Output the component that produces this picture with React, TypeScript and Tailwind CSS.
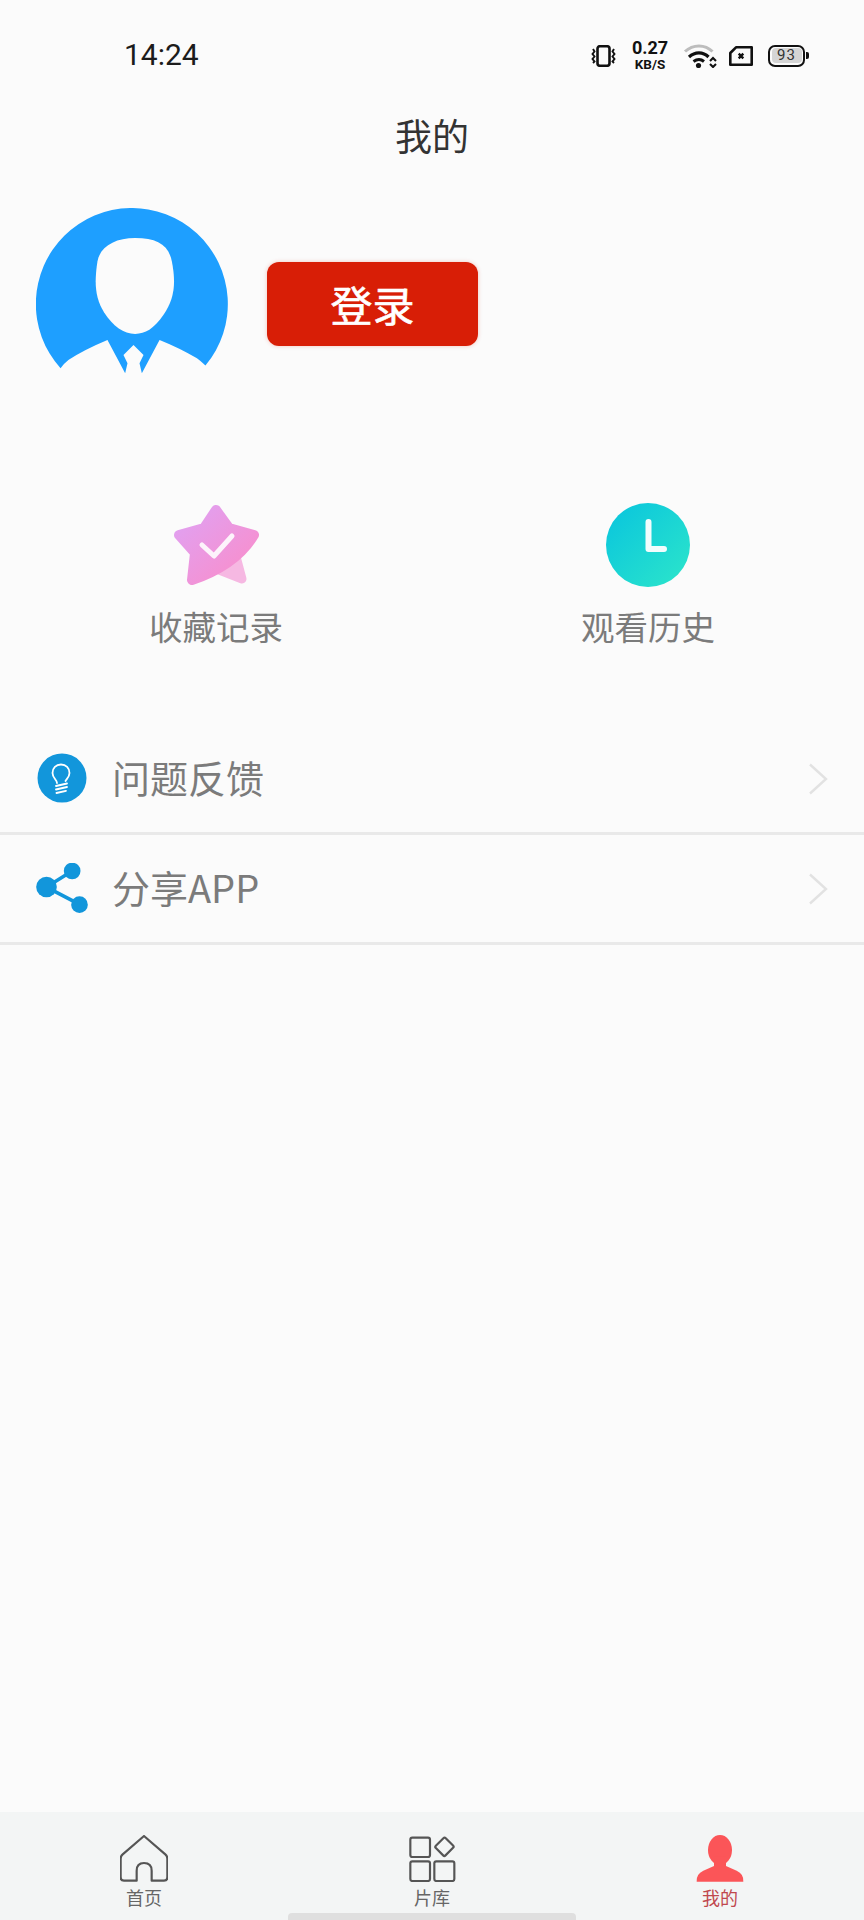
import { ReactNode } from 'react';

const cjk = "font-['Noto_Sans_CJK_SC',sans-serif]";

function StatusIcons() {
  return (
    <div className="flex items-center">
      {/* vibrate */}
      <svg width="25" height="22" viewBox="0 0 25 22" fill="none" stroke="#111">
        <rect x="6.5" y="1.2" width="12" height="19.6" rx="2.5" strokeWidth="2.6" />
        <path d="M2 4 L3.5 6.5 L1.5 9 L3.5 11.5 L1.5 14 L3.5 16.5 L2 18" strokeWidth="1.9" />
        <path d="M23 4 L21.5 6.5 L23.5 9 L21.5 11.5 L23.5 14 L21.5 16.5 L23 18" strokeWidth="1.9" />
      </svg>
      <div className="ml-[14px] w-[40px] flex flex-col items-center font-['Roboto',sans-serif] font-bold text-[#111]">
        <span className="text-[18px] leading-[14px]">0.27</span>
        <span className="text-[13.5px] leading-[12px] mt-[3px]">KB/S</span>
      </div>
      {/* wifi */}
      <svg className="ml-[13px]" width="34" height="24" viewBox="0 0 34 24" fill="none">
        <path d="M2 7.5 C10 0 22 0 29.5 7.5" stroke="#bdbdbd" strokeWidth="3" />
        <path d="M6 13 C12 7.5 20 7.5 25.5 13" stroke="#111" strokeWidth="3.2" />
        <path d="M10.5 17.5 C14 15 18 15 21 17.5" stroke="#111" strokeWidth="3" />
        <circle cx="15.5" cy="21.5" r="2.6" fill="#111" />
        <path d="M27 17 L30 14 L33 17 M27 20 L30 23 L33 20" stroke="#111" strokeWidth="2.1" />
      </svg>
      {/* no sim */}
      <svg className="ml-[12px]" width="24" height="20" viewBox="0 0 24 20" fill="none" stroke="#111">
        <path d="M7 1.3 H22.7 V18.7 H1.3 V7 Z" strokeWidth="2.6" strokeLinejoin="round" />
        <path d="M9.7 7.7 L14.3 12.3 M14.3 7.7 L9.7 12.3" strokeWidth="2.4" />
      </svg>
      {/* battery */}
      <div className="ml-[15px] w-[37px] h-[22px] rounded-[7px] border-[2.5px] border-[#111] p-[1.5px] relative">
        <div className="h-full rounded-[4px] bg-[#d5d5d5] flex items-center justify-center font-['Roboto',sans-serif] text-[15px] text-[#333] tracking-[1px]">
          93
        </div>
        <div className="absolute right-[-5.5px] top-[5px] w-[3px] h-[7px] rounded-r-[2px] bg-[#111]" />
      </div>
    </div>
  );
}

function Avatar() {
  return (
    <svg width="192" height="192" viewBox="48 55 575 575">
      <path
        d="M121.5 535 A287.5 287.5 0 1 1 555.5 527 Q540 512 530 505 Q480 475 418 450 L365 550 L358 520 L370 495 L340 465 L310 495 L322 520 L315 550 L262 450 Q190 480 145 510 Q132 520 121.5 535 Z"
        fill="#1e9fff"
      />
      <path
        d="M345 145 C410 145 445 165 455 215 C468 285 462 325 430 375 C400 418 375 432 345 432 C310 432 280 410 252 368 C225 325 222 280 232 215 C240 170 285 145 345 145 Z"
        fill="#fbfbfb"
      />
    </svg>
  );
}

function StarIcon() {
  return (
    <svg width="85" height="84" viewBox="0 0 85 84">
      <defs>
        <linearGradient id="star" x1="0" y1="0" x2="1" y2="1">
          <stop offset="0" stopColor="#dfa2f4" />
          <stop offset="1" stopColor="#fb8cc8" />
        </linearGradient>
      </defs>
      <path d="M60 46 L68 76 L40 65 Z" fill="#f6b8e2" stroke="#f6b8e2" strokeWidth="9" strokeLinejoin="round" />
      <path
        d="M42 7 L55 25 L80 32 Q62 62 18 77 L21 50 L5 32 L30 25 Z"
        fill="url(#star)"
        stroke="url(#star)"
        strokeWidth="10"
        strokeLinejoin="round"
      />
      <path d="M28 42 L40 53 L58 33" fill="none" stroke="#fdf3fb" strokeWidth="5" strokeLinecap="round" strokeLinejoin="round" />
    </svg>
  );
}

function ClockIcon() {
  return (
    <svg width="84" height="84" viewBox="0 0 84 84">
      <defs>
        <linearGradient id="clock" x1="0" y1="0" x2="1" y2="1">
          <stop offset="0" stopColor="#08c4de" />
          <stop offset="1" stopColor="#2de6ca" />
        </linearGradient>
      </defs>
      <circle cx="42" cy="42" r="42" fill="url(#clock)" />
      <path d="M42.5 19 V46 H58" fill="none" stroke="#f2fdfd" strokeWidth="6" strokeLinecap="round" strokeLinejoin="round" />
    </svg>
  );
}

function BulbIcon() {
  return (
    <svg width="50" height="50" viewBox="0 0 50 50">
      <circle cx="25" cy="25" r="24.5" fill="#1296db" />
      <path
        d="M20 30 C20 27 15.5 25 15.5 20 C15.5 15 19 11.5 24 11.5 C29 11.5 32.5 15 32.5 20 C32.5 24 29.5 26 28.5 28"
        fill="none"
        stroke="#fff"
        strokeWidth="1.8"
        strokeLinecap="round"
      />
      <path d="M19 33 L30 30.5 M19 36.5 L30 34 M19.5 40 L29 37.8" stroke="#fff" strokeWidth="1.8" strokeLinecap="round" />
    </svg>
  );
}

function ShareIcon() {
  return (
    <svg width="52" height="50" viewBox="48 368 153 150">
      <path d="M155 392 L78 440 L177 492" fill="none" stroke="#1296db" strokeWidth="11" />
      <circle cx="78" cy="440" r="31" fill="#1296db" />
      <circle cx="155" cy="392" r="25" fill="#1296db" />
      <circle cx="177" cy="493" r="25" fill="#1296db" />
    </svg>
  );
}

function HomeIcon() {
  return (
    <svg width="48" height="47" viewBox="90 105 144 141" fill="none">
      <path
        d="M162 108 L226 163 Q232 168 232 176 V232 Q232 242 222 242 H185 V212 Q185 189 162 189 Q140 189 140 212 V242 H102 Q92 242 92 232 V176 Q92 168 98 163 Z"
        stroke="#555"
        strokeWidth="6.5"
        strokeLinejoin="round"
      />
    </svg>
  );
}

function LibraryIcon() {
  return (
    <svg width="47" height="47" viewBox="955 105 141 141" fill="none" stroke="#555" strokeWidth="6.5">
      <rect x="959" y="113" width="59" height="58" rx="6" />
      <rect x="1041" y="119" width="41" height="42" rx="5" transform="rotate(45 1061 140)" />
      <rect x="959" y="184" width="59" height="59" rx="6" />
      <rect x="1031" y="184" width="60" height="59" rx="6" />
    </svg>
  );
}

function UserIcon() {
  return (
    <svg width="48" height="47" viewBox="168 105 144 141">
      <ellipse cx="240" cy="150" rx="36" ry="45" fill="#fb5558" />
      <rect x="222" y="170" width="36" height="34" fill="#fb5558" />
      <path d="M170 245 Q168 222 190 212 L222 198 L258 198 L290 212 Q312 222 310 245 Z" fill="#fb5558" />
    </svg>
  );
}

function Shortcut({ icon, label }: { icon: ReactNode; label: string }) {
  return (
    <div className="flex flex-col items-center">
      <div className="h-[84px] flex items-center justify-center">{icon}</div>
      <span className="mt-[15px] text-[33.5px] leading-[48px] text-[#7b7b7b]">{label}</span>
    </div>
  );
}

function MenuRow({ icon, label }: { icon: ReactNode; label: string }) {
  return (
    <div className="h-[110px] flex items-center pl-[36px] pr-[36px] border-b-[3px] border-[#e9e9e9]">
      <div className="w-[52px] -mt-[2px] flex justify-center">{icon}</div>
      <span className="ml-[24px] flex-1 text-[38px] leading-[50px] -mt-[3px] text-[#7b7b7b]">{label}</span>
      <svg width="20" height="32" viewBox="0 0 20 32" fill="none">
        <path d="M2 1.5 L18 16 L2 30.5" stroke="#e2e2e2" strokeWidth="2.4" />
      </svg>
    </div>
  );
}

function Tab({ icon, label, active }: { icon: ReactNode; label: string; active?: boolean }) {
  return (
    <div className="flex-1 flex flex-col items-center pt-[23px]">
      {icon}
      <span className={`mt-[3px] text-[18px] leading-[24px] ${active ? 'text-[#c0484e]' : 'text-[#666666]'}`}>{label}</span>
    </div>
  );
}

export default function App() {
  return (
    <div className={`relative w-[864px] h-[1920px] flex flex-col bg-[#fbfbfb] overflow-hidden ${cjk}`}>
      <div className="h-[110px] pt-[37px] pl-[124px] pr-[59px] flex items-start justify-between">
        <span className="font-['Roboto',sans-serif] text-[30px] leading-[36px] text-[#1c1c1c]">14:24</span>
        <div className="pt-[4px]">
          <StatusIcons />
        </div>
      </div>

      <h1 className="h-[50px] text-center text-[37px] leading-[50px] font-normal text-[#333333]">我的</h1>

      <div className="mt-[48px] pl-[36px] flex items-center">
        <Avatar />
        <button className="ml-[39px] -mt-[1px] w-[211px] h-[84px] rounded-[12px] bg-[#d81e06] text-white text-[42px] [-webkit-text-stroke:0.6px_white] shadow-[0_0_4px_rgba(216,30,6,0.25)]">
          登录
        </button>
      </div>

      <div className="mt-[103px] grid grid-cols-2">
        <Shortcut icon={<StarIcon />} label="收藏记录" />
        <Shortcut icon={<ClockIcon />} label="观看历史" />
      </div>

      <div className="mt-[75px]">
        <MenuRow icon={<BulbIcon />} label="问题反馈" />
        <MenuRow icon={<ShareIcon />} label="分享APP" />
      </div>

      <div className="flex-1" />

      <div className="h-[108px] flex bg-[#f3f5f5]">
        <Tab icon={<HomeIcon />} label="首页" />
        <Tab icon={<LibraryIcon />} label="片库" />
        <Tab icon={<UserIcon />} label="我的" active />
      </div>

      <div className="absolute left-[288px] bottom-0 w-[288px] h-[7px] rounded-t-[4px] bg-[#dfdfdf]" />
    </div>
  );
}
